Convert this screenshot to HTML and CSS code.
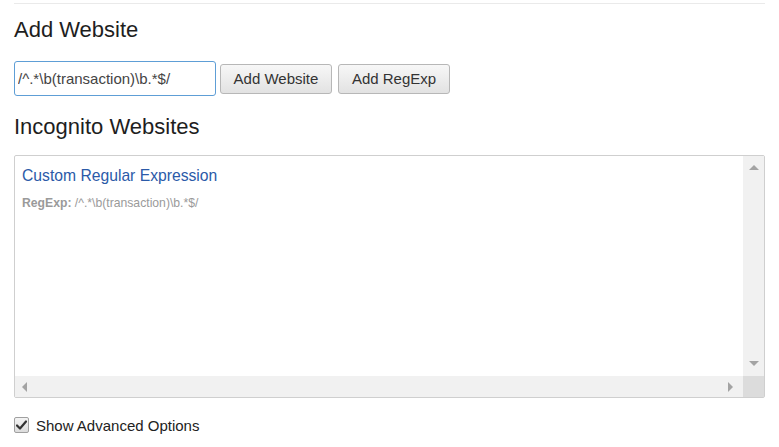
FILE: index.html
```html
<!DOCTYPE html>
<html lang="en">
<head>
    <meta charset="UTF-8">
    <meta name="viewport" content="width=device-width, initial-scale=1.0">
    <title>Incognito Websites</title>
    <link rel="stylesheet" href="styles.css">
</head>
<body>
    <div class="options">
        <section class="add-site">
            <h2>Add Website</h2>
            <div class="row">
                <input type="text" id="site-input" value="/^.*\b(transaction)\b.*$/">
                <button class="btn">Add Website</button>
                <button class="btn btn-regexp">Add RegExp</button>
            </div>
        </section>

        <section class="sites">
            <h2>Incognito Websites</h2>
            <div class="site-list">
                <div class="list-body">
                    <div class="site-item">
                        <a class="site-title" href="#">Custom Regular Expression</a>
                        <p class="site-rule"><strong>RegExp:</strong> /^.*\b(transaction)\b.*$/</p>
                    </div>
                </div>
                <div class="vbar">
                    <span class="arrow arrow-up"></span>
                    <span class="arrow arrow-down"></span>
                </div>
                <div class="hbar">
                    <span class="arrow arrow-left"></span>
                    <span class="arrow arrow-right"></span>
                </div>
                <div class="corner"></div>
            </div>
        </section>

        <label class="advanced">
            <span class="check">
                <svg width="11" height="10" viewBox="0 0 11 10"><path d="M1 5.5 L4 8.5 L10 1.5" fill="none" stroke="#333" stroke-width="2.2" stroke-linecap="round" stroke-linejoin="round"/></svg>
            </span>
            Show Advanced Options
        </label>
    </div>
</body>
</html>
```

FILE: styles.css
```css
/* General styles */
* {
    box-sizing: border-box;
    margin: 0;
    padding: 0;
    font-family: "Liberation Sans", Arial, sans-serif;
}

body {
    background: #fff;
    color: #222;
}

.options {
    margin: 0 14px;
    padding-top: 3px;
}

.add-site {
    border-top: 1px solid #eaeaea;
    padding-top: 13px;
}

h2 {
    font-size: 22px;
    font-weight: normal;
    line-height: 26px;
    color: #1e1e1e;
}

.row {
    display: flex;
    align-items: center;
    margin-top: 18px;
}

#site-input {
    width: 202px;
    height: 35px;
    padding: 0 3px;
    border: 1px solid #5e9ed6;
    border-radius: 3px;
    font-size: 15px;
    color: #444;
    outline: none;
}

.btn {
    width: 112px;
    height: 30px;
    margin-left: 4px;
    border: 1px solid #b7b7b7;
    border-radius: 3px;
    background: linear-gradient(#f7f7f7, #e2e2e2);
    font-size: 15px;
    color: #333;
}

.btn-regexp {
    margin-left: 6px;
}

.sites {
    margin-top: 18px;
}

.site-list {
    display: grid;
    grid-template-columns: 1fr 21px;
    grid-template-rows: 220px 21px;
    margin-top: 15px;
    border: 1px solid #cfcfcf;
    border-radius: 2px;
}

.list-body {
    padding: 10px 7px;
}

.site-title {
    display: block;
    font-size: 15.7px;
    line-height: 20px;
    color: #2b5aa8;
    text-decoration: none;
}

.site-rule {
    margin-top: 9px;
    font-size: 12.2px;
    line-height: 16px;
    color: #9a9a9a;
}

.vbar {
    display: flex;
    flex-direction: column;
    justify-content: space-between;
    align-items: center;
    padding: 9px 0 10px;
    background: #f1f1f1;
}

.hbar {
    display: flex;
    justify-content: space-between;
    align-items: center;
    padding: 0 10px 0 7px;
    background: #f1f1f1;
}

.corner {
    background: #dcdcdc;
}

.arrow {
    width: 0;
    height: 0;
    border: 0 solid transparent;
}

.arrow-up {
    border-width: 0 5px 5px;
    border-bottom-color: #a3a3a3;
}

.arrow-down {
    border-width: 5px 5px 0;
    border-top-color: #a3a3a3;
}

.arrow-left {
    border-width: 5px 5px 5px 0;
    border-right-color: #a3a3a3;
}

.arrow-right {
    border-width: 5px 0 5px 5px;
    border-left-color: #a3a3a3;
}

.advanced {
    display: flex;
    align-items: center;
    gap: 7px;
    margin-top: 19px;
    font-size: 15px;
    line-height: 18px;
    color: #222;
}

.check {
    display: flex;
    align-items: center;
    justify-content: center;
    width: 15px;
    height: 16px;
    margin-top: -3px;
    border: 1px solid #a0a0a0;
    border-radius: 2px;
    background: linear-gradient(#f4f4f4, #dcdcdc);
}
```
